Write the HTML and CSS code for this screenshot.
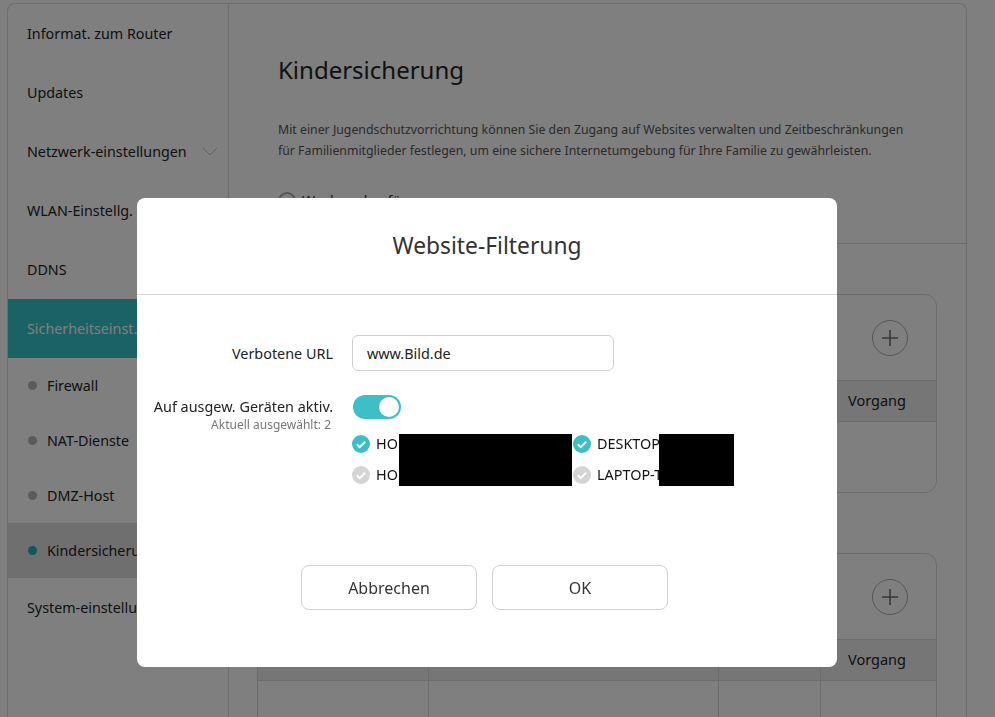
FILE: index.html
```html
<!DOCTYPE html>
<html>
<head>
    <meta charset="utf-8">
    <link rel="stylesheet" href="styles.css">
</head>
<body>
    <div class="page">
        <div class="frame">
            <ul class="sidebar">
                <li class="navItem">Informat. zum Router</li>
                <li class="navItem">Updates</li>
                <li class="navItem hasChildren">
                    Netzwerk-einstellungen
                    <svg class="chevron" width="16" height="9" viewBox="0 0 16 9"><path d="M1 1l7 7 7-7" fill="none" stroke="#c4c4c4" stroke-width="1"/></svg>
                </li>
                <li class="navItem">WLAN-Einstellg.</li>
                <li class="navItem">DDNS</li>
                <li class="navItem active">Sicherheitseinst.</li>
                <li class="navSub"><span class="dot"></span>Firewall</li>
                <li class="navSub"><span class="dot"></span>NAT-Dienste</li>
                <li class="navSub"><span class="dot"></span>DMZ-Host</li>
                <li class="navSub current"><span class="dot"></span>Kindersicherung</li>
                <li class="navItem">System-einstellungen</li>
            </ul>

            <div class="main">
                <div class="intro">
                    <h1>Kindersicherung</h1>
                    <p class="desc">Mit einer Jugendschutzvorrichtung können Sie den Zugang auf Websites verwalten und Zeitbeschränkungen<br>für Familienmitglieder festlegen, um eine sichere Internetumgebung für Ihre Familie zu gewährleisten.</p>
                    <p class="schedule"><span class="clock"></span>Wochenplan für</p>
                </div>

                <div class="cards">
                    <div class="card">
                        <div class="cardHead">
                            <svg class="plus" width="36" height="36" viewBox="0 0 36 36"><circle cx="18" cy="18" r="17.5" fill="none" stroke="#a8a8a8"/><path d="M10 18h16M18 10v16" stroke="#707070" stroke-width="1.6"/></svg>
                        </div>
                        <div class="row thead">
                            <div class="cell"></div>
                            <div class="cell"></div>
                            <div class="cell"></div>
                            <div class="cell">Vorgang</div>
                        </div>
                        <div class="row tbody">
                            <div class="cell"></div>
                            <div class="cell"></div>
                            <div class="cell"></div>
                            <div class="cell"></div>
                        </div>
                    </div>

                    <div class="card">
                        <div class="cardHead">
                            <svg class="plus" width="36" height="36" viewBox="0 0 36 36"><circle cx="18" cy="18" r="17.5" fill="none" stroke="#a8a8a8"/><path d="M10 18h16M18 10v16" stroke="#707070" stroke-width="1.6"/></svg>
                        </div>
                        <div class="row thead">
                            <div class="cell"></div>
                            <div class="cell"></div>
                            <div class="cell"></div>
                            <div class="cell">Vorgang</div>
                        </div>
                        <div class="row tbody">
                            <div class="cell"></div>
                            <div class="cell"></div>
                            <div class="cell"></div>
                            <div class="cell"></div>
                        </div>
                    </div>
                </div>
            </div>
        </div>
    </div>

    <div class="overlay">
        <div class="dialog">
            <div class="dialogHead">Website-Filterung</div>

            <div class="form">
                <label class="label urlLabel">Verbotene URL</label>
                <input class="urlInput" type="text" value="www.Bild.de">

                <div class="label activeLabel">
                    Auf ausgew. Geräten aktiv.
                    <div class="hint">Aktuell ausgewählt: 2</div>
                </div>
                <div class="deviceBox">
                    <div class="toggle"><span class="knob"></span></div>
                    <div class="devices">
                        <div class="device">
                            <svg width="18" height="18" viewBox="0 0 18 18"><circle cx="9" cy="9" r="9" fill="#3dbec5"/><path d="M4.8 9.3l2.9 2.8 5.5-5.4" fill="none" stroke="#fff" stroke-width="2"/></svg>
                            HO
                        </div>
                        <div class="device">
                            <svg width="18" height="18" viewBox="0 0 18 18"><circle cx="9" cy="9" r="9" fill="#3dbec5"/><path d="M4.8 9.3l2.9 2.8 5.5-5.4" fill="none" stroke="#fff" stroke-width="2"/></svg>
                            DESKTOP
                        </div>
                        <div class="device">
                            <svg width="18" height="18" viewBox="0 0 18 18"><circle cx="9" cy="9" r="9" fill="#d4d4d4"/><path d="M4.8 9.3l2.9 2.8 5.5-5.4" fill="none" stroke="#fff" stroke-width="2"/></svg>
                            HO
                        </div>
                        <div class="device">
                            <svg width="18" height="18" viewBox="0 0 18 18"><circle cx="9" cy="9" r="9" fill="#d4d4d4"/><path d="M4.8 9.3l2.9 2.8 5.5-5.4" fill="none" stroke="#fff" stroke-width="2"/></svg>
                            LAPTOP-T
                        </div>
                        <span class="redact r1"></span>
                        <span class="redact r2"></span>
                    </div>
                </div>
            </div>

            <div class="actions">
                <button class="btn">Abbrechen</button>
                <button class="btn">OK</button>
            </div>
        </div>
    </div>
</body>
</html>
```

FILE: styles.css
```css
body {
    margin: 0;
    font-family: "Noto Sans", "Open Sans", sans-serif;
    color: #333;
    background: white;
}

.page {
    height: 717px;
    overflow: hidden;
    padding: 3px 28px 0 7px;
    box-sizing: border-box;
}

.frame {
    display: flex;
    height: 100%;
    border: 1px solid #dcdcdc;
    border-bottom: none;
    border-radius: 8px 8px 0 0;
}

/* sidebar */
.sidebar {
    width: 220px;
    flex-shrink: 0;
    margin: 0;
    padding: 0;
    list-style: none;
    border-right: 1px solid #dcdcdc;
}

.navItem {
    height: 59px;
    display: flex;
    align-items: center;
    padding-left: 19px;
    font-size: 14.3px;
    color: #222;
}

.hasChildren {
    justify-content: space-between;
    padding-right: 10px;
}

.navItem.active {
    background: #34c4c6;
    color: white;
}

.navSub {
    height: 55px;
    display: flex;
    align-items: center;
    padding-left: 20px;
    font-size: 14.3px;
    color: #222;
}

.navSub.current {
    background: #dfdfdf;
}

.dot {
    width: 9px;
    height: 9px;
    border-radius: 50%;
    background: #b6b6b6;
    margin-right: 10px;
}

.current .dot {
    background: #25b0b2;
}

/* main */
.main {
    flex: 1;
}

.intro {
    height: 240px;
    box-sizing: border-box;
    padding: 50px 49px 0;
    border-bottom: 1px solid #dcdcdc;
}

.intro h1 {
    margin: 0;
    font-size: 24px;
    font-weight: normal;
    line-height: 32px;
    color: #222;
}

.desc {
    margin: 33px 0 0;
    font-size: 12.3px;
    line-height: 21px;
    color: #555;
}

.schedule {
    margin: 30px 0 0;
    display: flex;
    align-items: center;
    gap: 6px;
    font-size: 14px;
    line-height: 20px;
}

.clock {
    width: 14px;
    height: 14px;
    border-radius: 50%;
    border: 2px solid #aaa;
}

.cards {
    padding: 50px 29px 0 28px;
}

.card {
    border: 1px solid #d8d8d8;
    border-radius: 12px;
    overflow: hidden;
}

.card + .card {
    margin-top: 60px;
}

.cardHead {
    height: 85px;
    display: flex;
    align-items: center;
    justify-content: flex-end;
    padding-right: 28px;
}

.row {
    display: grid;
    grid-template-columns: 170px 290px 102px 1fr;
}

.thead {
    height: 42px;
    background: #ececec;
    border-top: 1px solid #d8d8d8;
    border-bottom: 1px solid #d8d8d8;
    box-sizing: border-box;
}

.tbody {
    height: 70px;
}

.cell {
    display: flex;
    align-items: center;
    padding-bottom: 2px;
    font-size: 14.5px;
    color: #222;
    padding-left: 27px;
    box-sizing: border-box;
}

.cell + .cell {
    border-left: 1px solid #d8d8d8;
}

/* dialog */
.overlay {
    position: fixed;
    inset: 0;
    background: rgba(0, 0, 0, 0.5);
    padding: 198px 0 0 137px;
}

.dialog {
    width: 700px;
    height: 469px;
    background: white;
    border-radius: 8px;
}

.dialogHead {
    height: 96px;
    line-height: 96px;
    text-align: center;
    font-size: 22.8px;
    color: #333;
    border-bottom: 1px solid #d6d6d6;
}

.form {
    display: grid;
    grid-template-columns: 196px 1fr;
    column-gap: 19px;
    row-gap: 24px;
    padding-top: 40px;
}

.label {
    text-align: right;
    font-size: 14.4px;
    color: #222;
}

.urlLabel {
    align-self: center;
}

.urlInput {
    width: 262px;
    height: 36px;
    box-sizing: border-box;
    border: 1px solid #cfcfcf;
    border-radius: 6px;
    padding: 0 14px;
    font-family: inherit;
    font-size: 14.4px;
    color: #222;
    outline: none;
}

.activeLabel {
    line-height: 22px;
    padding-top: 1px;
    padding-right: 0;
}

.hint {
    font-size: 12px;
    line-height: 14px;
    color: #777;
    margin-right: 2px;
}

.toggle {
    width: 48px;
    height: 24px;
    box-sizing: border-box;
    margin-left: 1px;
    padding: 2px;
    border-radius: 12px;
    background: #3ebfc5;
    display: flex;
    justify-content: flex-end;
}

.knob {
    width: 20px;
    height: 20px;
    border-radius: 50%;
    background: white;
}

.devices {
    position: relative;
    display: grid;
    grid-template-columns: 221px 1fr;
    margin-top: 9px;
}

.device {
    height: 31px;
    display: flex;
    align-items: center;
    gap: 6px;
    font-size: 14.4px;
    color: #111;
}

.redact {
    position: absolute;
    top: 6px;
    height: 52px;
    background: black;
}

.r1 {
    left: 47px;
    width: 173px;
}

.r2 {
    left: 307px;
    width: 75px;
}

.actions {
    display: flex;
    justify-content: center;
    gap: 15px;
    margin-top: 75px;
    padding-right: 5px;
}

.btn {
    width: 176px;
    height: 45px;
    background: white;
    border: 1px solid #cfcfcf;
    border-radius: 8px;
    font-family: inherit;
    font-size: 16px;
    color: #333;
}
```
